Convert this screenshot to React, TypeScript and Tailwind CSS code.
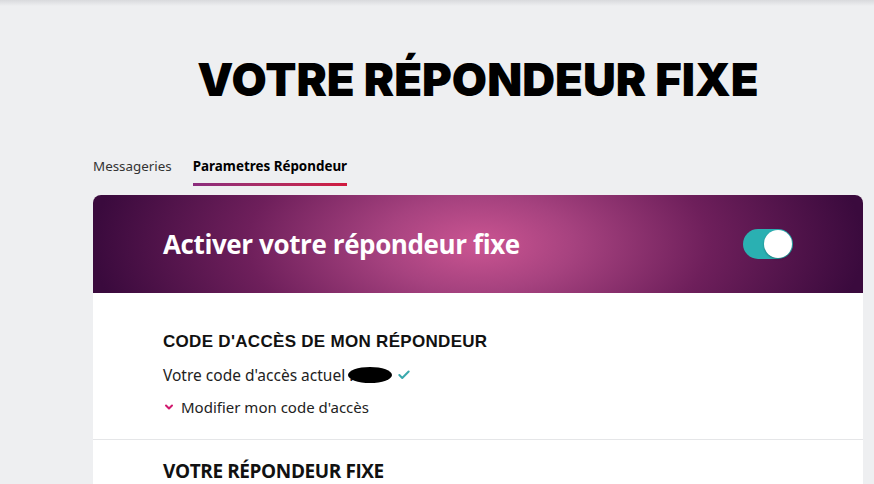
import { Check, ChevronDown } from "lucide-react";

const App = () => {
  return (
    <div className="relative h-[484px] w-[874px] overflow-hidden bg-[#eeeff1] font-['Noto_Sans',sans-serif] text-[#111]">
      {/* top shadow */}
      <div className="absolute left-0 right-0 top-0 h-[6px] bg-gradient-to-b from-[#d9dadd] to-[#eeeff1]" />
      <div className="ml-[93px] w-[770px]">
        <h1 className="pt-[52px] text-center font-['Inter',sans-serif] text-[45.5px] font-black leading-[56px] text-black">
          VOTRE RÉPONDEUR FIXE
        </h1>

        {/* tabs */}
        <div className="mt-[48px] flex gap-[21px] text-[13.4px] leading-[20px]">
          <button className="pb-[10px] text-[#333]">Messageries</button>
          <button className="relative pb-[10px] font-bold text-black">
            Parametres Répondeur
            <span className="absolute bottom-0 left-0 right-0 h-[3px] bg-gradient-to-r from-[#8a2c7d] to-[#d1193e]" />
          </button>
        </div>

        {/* card */}
        <div className="mt-[9px] overflow-hidden rounded-t-[8px] bg-white">
          <div className="flex h-[98px] items-center justify-between bg-[radial-gradient(ellipse_50%_190%_at_50%_50%,#cb5592_0%,#a6427f_25%,#6e1f5b_60%,#3a0a3d_100%)] pl-[70px] pr-[70px]">
            <h2 className="font-['Open_Sans',sans-serif] text-[26px] font-bold tracking-[-0.4px] text-white">
              Activer votre répondeur fixe
            </h2>
            <div className="flex h-[30px] w-[50px] items-center justify-end rounded-full bg-[#2ab0b2] p-[1px]">
              <div className="h-[28px] w-[28px] rounded-full bg-white shadow-[0_1px_2px_rgba(0,0,0,0.3)]" />
            </div>
          </div>

          <div className="border-b border-[#e5e6e8] pb-[21px] pl-[70px] pt-[37px]">
            <h3 className="font-['Liberation_Sans',sans-serif] text-[17px] font-bold leading-[24px] tracking-[0.3px]">
              CODE D'ACCÈS DE MON RÉPONDEUR
            </h3>
            <p className="mt-[10px] flex items-center text-[15.5px] leading-[22px] text-[#222]">
              Votre code d'accès actuel :
              <span className="-ml-[5px] inline-block h-[16px] w-[44px] rounded-[50%] bg-black" />
              <Check className="ml-[5px] h-[14px] w-[14px] text-[#3aa9ad]" strokeWidth={3.5} />
            </p>
            <button className="mt-[10px] flex items-center gap-[6px] text-[15px] leading-[22px] text-[#222]">
              <ChevronDown className="h-[12px] w-[12px] text-[#d1196e]" strokeWidth={4} />
              Modifier mon code d'accès
            </button>
          </div>

          <div className="pl-[70px] pt-[18px]">
            <h3 className="font-['Open_Sans',sans-serif] text-[19px] font-bold leading-[26px] tracking-[-0.4px]">
              VOTRE RÉPONDEUR FIXE
            </h3>
          </div>
        </div>
      </div>
    </div>
  );
};

export default App;
